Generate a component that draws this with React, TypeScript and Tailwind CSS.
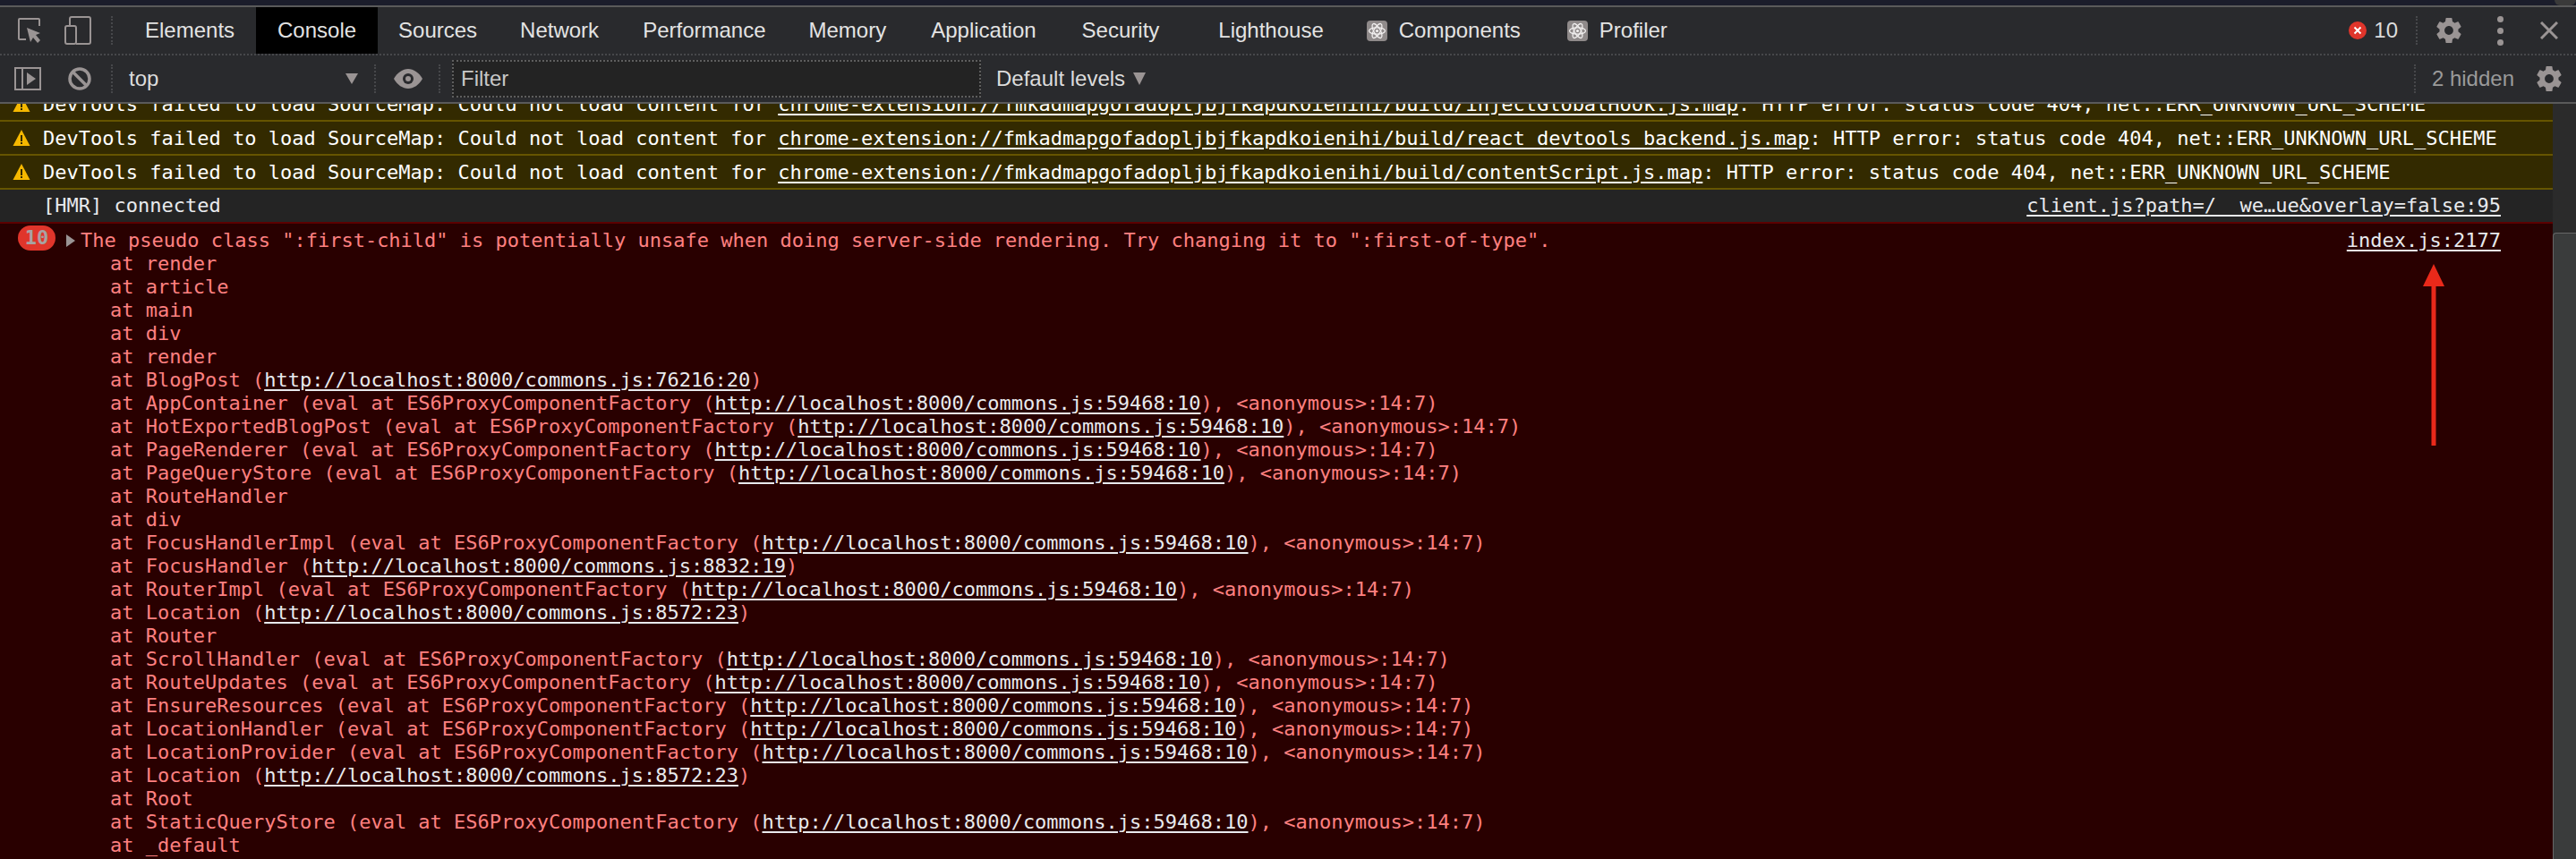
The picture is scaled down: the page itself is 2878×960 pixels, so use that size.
const GEAR =
  "M19.43 12.98c.04-.32.07-.64.07-.98s-.03-.66-.07-.98l2.11-1.65c.19-.15.24-.42.12-.64l-2-3.46c-.12-.22-.39-.3-.61-.22l-2.49 1c-.52-.4-1.08-.73-1.69-.98l-.38-2.65C14.46 2.18 14.25 2 14 2h-4c-.25 0-.46.18-.49.42l-.38 2.65c-.61.25-1.17.59-1.69.98l-2.49-1c-.23-.09-.49 0-.61.22l-2 3.46c-.13.22-.07.49.12.64l2.11 1.65c-.04.32-.07.65-.07.98s.03.66.07.98l-2.11 1.65c-.19.15-.24.42-.12.64l2 3.46c.12.22.39.3.61.22l2.49-1c.52.4 1.08.73 1.69.98l.38 2.65c.03.24.24.42.49.42h4c.25 0 .46-.18.49-.42l.38-2.65c.61-.25 1.17-.59 1.69-.98l2.49 1c.23.09.49 0 .61-.22l2-3.46c.12-.22.07-.49-.12-.64l-2.11-1.65zM12 15.5c-1.93 0-3.5-1.57-3.5-3.5s1.57-3.5 3.5-3.5 3.5 1.57 3.5 3.5-1.57 3.5-3.5 3.5z";

function Gear() {
  return (
    <svg viewBox="2 2 20 20" className="w-[28px] h-[28px] text-[#9a9494]" fill="currentColor">
      <path d={GEAR} />
    </svg>
  );
}

function Divider({ className = "" }: { className?: string }) {
  return <div className={`w-0 h-[32px] border-l-2 border-dotted border-[#47484b] ${className}`} />;
}

function Atom() {
  return (
    <svg viewBox="0 0 23 23" className="w-[23px] h-[23px]">
      <rect width="23" height="23" rx="4" fill="#8f8a8a" />
      <g fill="none" stroke="#f2f0f0" strokeWidth="1.3">
        <ellipse cx="11.5" cy="11.5" rx="9" ry="3.6" />
        <ellipse cx="11.5" cy="11.5" rx="9" ry="3.6" transform="rotate(60 11.5 11.5)" />
        <ellipse cx="11.5" cy="11.5" rx="9" ry="3.6" transform="rotate(120 11.5 11.5)" />
      </g>
      <circle cx="11.5" cy="11.5" r="1.6" fill="#f2f0f0" />
    </svg>
  );
}

function TabBar() {
  const tab = "text-[24px] text-[#e3e3e3]";
  return (
    <div className="h-[52px] bg-[#292a2d] flex items-center font-['Liberation_Sans',sans-serif] whitespace-nowrap">
      <svg viewBox="0 0 26 28" className="w-[26px] h-[28px] ml-[20px] text-[#9a9494]">
        <path d="M9 24H2a1 1 0 0 1-1-1V2a1 1 0 0 1 1-1h21a1 1 0 0 1 1 1v7" fill="none" stroke="currentColor" strokeWidth="2" />
        <path d="M10 11l15 6-5 2 5 6-3 3-5-6-3 5z" fill="currentColor" />
      </svg>
      <svg viewBox="0 0 30 32" className="w-[30px] h-[32px] ml-[26px] text-[#9a9494]" fill="none" stroke="currentColor" strokeWidth="2">
        <path d="M6 11V3a2 2 0 0 1 2-2h19a2 2 0 0 1 2 2v26a2 2 0 0 1-2 2H13" />
        <rect x="1" y="11" width="12" height="20" rx="2" />
      </svg>
      <Divider className="ml-[22px]" />
      <span className={`${tab} ml-[36px]`}>Elements</span>
      <div className="ml-[24px] h-full w-[136px] bg-black flex items-center justify-center">
        <span className={tab}>Console</span>
      </div>
      <span className={`${tab} ml-[23px]`}>Sources</span>
      <span className={`${tab} ml-[48px]`}>Network</span>
      <span className={`${tab} ml-[49px]`}>Performance</span>
      <span className={`${tab} ml-[48px]`}>Memory</span>
      <span className={`${tab} ml-[50px]`}>Application</span>
      <span className={`${tab} ml-[51px]`}>Security</span>
      <span className={`${tab} ml-[66px]`}>Lighthouse</span>
      <div className="ml-[48px]"><Atom /></div>
      <span className={`${tab} ml-[13px]`}>Components</span>
      <div className="ml-[52px]"><Atom /></div>
      <span className={`${tab} ml-[13px]`}>Profiler</span>
      <div className="flex-1" />
      <div className="w-[20px] h-[20px] rounded-full bg-[#e0352b] flex items-center justify-center">
        <svg viewBox="0 0 10 10" className="w-[10px] h-[10px]" stroke="#fff" strokeWidth="2">
          <path d="M1.5 1.5l7 7M8.5 1.5l-7 7" />
        </svg>
      </div>
      <span className="ml-[8px] text-[24px] text-[#dcdcdc]">10</span>
      <Divider className="ml-[20px]" />
      <div className="ml-[21px]"><Gear /></div>
      <div className="ml-[40px] flex flex-col gap-[6px]">
        <div className="w-[7px] h-[7px] rounded-full bg-[#9a9494]" />
        <div className="w-[7px] h-[7px] rounded-full bg-[#9a9494]" />
        <div className="w-[7px] h-[7px] rounded-full bg-[#9a9494]" />
      </div>
      <svg viewBox="0 0 20 20" className="w-[20px] h-[20px] ml-[41px] mr-[20px]" stroke="#9a9494" strokeWidth="3">
        <path d="M1 1l18 18M19 1L1 19" />
      </svg>
    </div>
  );
}

function Toolbar() {
  return (
    <div className="h-[54px] bg-[#292a2d] border-t-2 border-dotted border-[#47484b] flex items-center font-['Liberation_Sans',sans-serif] whitespace-nowrap">
      <svg viewBox="0 0 30 26" className="w-[30px] h-[26px] ml-[16px] text-[#9a9494]">
        <path d="M1 1h28v24H1zM9 1v24" fill="none" stroke="currentColor" strokeWidth="2" />
        <path d="M14 6l10 7-10 7z" fill="currentColor" />
      </svg>
      <svg viewBox="0 0 26 26" className="w-[26px] h-[26px] ml-[30px] text-[#9a9494]" fill="none" stroke="currentColor" strokeWidth="3.5">
        <circle cx="13" cy="13" r="11" />
        <path d="M5 5l16 16" />
      </svg>
      <Divider className="ml-[22px]" />
      <span className="ml-[18px] w-[242px] text-[24px] text-[#dcdcdc]">top</span>
      <svg viewBox="0 0 14 12" className="w-[14px] h-[12px]"><path d="M0 0h14L7 12z" fill="#9a9494" /></svg>
      <Divider className="ml-[18px]" />
      <svg viewBox="0 0 32 22" className="w-[32px] h-[22px] ml-[20px]">
        <path d="M0 11C4 4 10 0 16 0s12 4 16 11c-4 7-10 11-16 11S4 18 0 11z" fill="#9a9494" />
        <circle cx="16" cy="11" r="6" fill="#292a2d" />
        <circle cx="16" cy="11" r="3" fill="#9a9494" />
      </svg>
      <Divider className="ml-[18px]" />
      <div className="ml-[13px] w-[591px] h-[42px] bg-[#232323] border-2 border-dotted border-[#5e5e5e] flex items-center pl-[8px] text-[24px] text-[#c8c8c8]">
        Filter
      </div>
      <span className="ml-[17px] text-[24px] text-[#dcdcdc]">Default levels</span>
      <svg viewBox="0 0 14 14" className="w-[14px] h-[14px] ml-[9px]"><path d="M0 0h14L7 14z" fill="#9a9494" /></svg>
      <div className="flex-1" />
      <Divider />
      <span className="ml-[18px] text-[24px] text-[#9a9a9a]">2 hidden</span>
      <div className="ml-[25px] mr-[16px]"><Gear /></div>
    </div>
  );
}

const linkClass = "underline decoration-2 underline-offset-[3px]";

function WarningRow({ file, tail, className = "" }: { file: string; tail: string; className?: string }) {
  return (
    <div className={`h-[38px] shrink-0 bg-[#332a00] border-b-2 border-[#665500] flex items-center text-white ${className}`}>
      <svg viewBox="0 0 20 20" className="w-[20px] h-[20px] ml-[14px] mr-[14px] shrink-0">
        <path d="M10 1l9.5 18H.5z" fill="#f5b800" />
        <path d="M9 7h2v7H9zM9 15h2v2H9z" fill="#332a00" />
      </svg>
      <div className="pt-[1px]">
        <span>DevTools failed to load SourceMap: Could not load content for </span>
        <span className={linkClass}>{"chrome-extension://fmkadmapgofadopljbjfkapdkoienihi/build/" + file}</span>
        <span>{tail}</span>
      </div>
    </div>
  );
}

const url = (path: string) => "http://localhost:8000/commons.js:" + path;
const proxied = (name: string) => ({
  before: `at ${name} (eval at ES6ProxyComponentFactory (`,
  link: url("59468:10"),
  after: "), <anonymous>:14:7)",
});
const plain = (name: string) => ({ before: `at ${name}`, link: "", after: "" });
const direct = (name: string, path: string) => ({ before: `at ${name} (`, link: url(path), after: ")" });

const frames = [
  plain("render"),
  plain("article"),
  plain("main"),
  plain("div"),
  plain("render"),
  direct("BlogPost", "76216:20"),
  proxied("AppContainer"),
  proxied("HotExportedBlogPost"),
  proxied("PageRenderer"),
  proxied("PageQueryStore"),
  plain("RouteHandler"),
  plain("div"),
  proxied("FocusHandlerImpl"),
  direct("FocusHandler", "8832:19"),
  proxied("RouterImpl"),
  direct("Location", "8572:23"),
  plain("Router"),
  proxied("ScrollHandler"),
  proxied("RouteUpdates"),
  proxied("EnsureResources"),
  proxied("LocationHandler"),
  proxied("LocationProvider"),
  direct("Location", "8572:23"),
  plain("Root"),
  proxied("StaticQueryStore"),
  plain("_default"),
];

function ErrorBlock() {
  return (
    <div className="relative flex-1 bg-[#290000] border-t-2 border-[#5c0000] text-[#ff8080] pt-[6px] pr-[58px]">
      <div className="flex items-center h-[26px]">
        <div className="ml-[20px] mb-[6px] w-[42px] h-[28px] rounded-full bg-[#e0352b] text-[#a8a2a2] font-bold flex items-center justify-center shrink-0">
          10
        </div>
        <svg viewBox="0 0 10 14" className="w-[10px] h-[14px] ml-[12px] mr-[6px] shrink-0"><path d="M0 0l10 7-10 7z" fill="#9a9494" /></svg>
        <span>The pseudo class ":first-child" is potentially unsafe when doing server-side rendering. Try changing it to ":first-of-type".</span>
        <div className="flex-1" />
        <span className={`${linkClass} text-[#e8eaed]`}>index.js:2177</span>
      </div>
      <div className="pl-[123px]">
        {frames.map((f, i) => (
          <div key={i} className="h-[26px]">
            {f.before}
            {f.link && <span className={`${linkClass} text-[#e8eaed]`}>{f.link}</span>}
            {f.after}
          </div>
        ))}
      </div>
      <svg viewBox="0 0 24 203" className="absolute left-[2707px] top-[45px] w-[24px] h-[203px]">
        <path d="M12 0l12 25H14.500v178h-5V25H0z" fill="#e9291a" />
      </svg>
    </div>
  );
}

function Scrollbar() {
  return (
    <div className="w-[26px] shrink-0 bg-[#2b2b2b] flex flex-col">
      <div className="h-[144px]" />
      <div className="flex-1 bg-[#3a3c3c] border-l border-t border-[#666666] rounded-tl-[4px]" />
    </div>
  );
}

export default function App() {
  return (
    <div className="w-[2878px] h-[960px] overflow-hidden flex flex-col bg-[#242424]">
      <div className="h-[6px] shrink-0 bg-[#1b1d2b] flex justify-end">
        <div className="w-[24px] h-[6px] rounded-b-full bg-[#3a3a3a]" />
      </div>
      <div className="h-[2px] shrink-0 bg-[#5a5a5a]" />
      <TabBar />
      <Toolbar />
      <div className="h-[2px] shrink-0 bg-[#5a5a5a]" />
      <div className="flex-1 flex min-h-0">
        <div className="w-[2852px] flex flex-col overflow-hidden font-['DejaVu_Sans_Mono',monospace] text-[22px] leading-[26px] whitespace-pre">
          <WarningRow
            file="injectGlobalHook.js.map"
            tail=": HTTP error: status code 404, net::ERR_UNKNOWN_URL_SCHEME"
            className="-mt-[18px]"
          />
          <WarningRow
            file="react_devtools_backend.js.map"
            tail=": HTTP error: status code 404, net::ERR_UNKNOWN_URL_SCHEME"
          />
          <WarningRow file="contentScript.js.map" tail=": HTTP error: status code 404, net::ERR_UNKNOWN_URL_SCHEME" />
          <div className="h-[36px] shrink-0 flex items-center justify-between pl-[48px] pr-[58px] text-[#e8eaed]">
            <span>[HMR] connected</span>
            <span className={linkClass}>{"client.js?path=/__we…ue&overlay=false:95"}</span>
          </div>
          <ErrorBlock />
        </div>
        <Scrollbar />
      </div>
    </div>
  );
}
